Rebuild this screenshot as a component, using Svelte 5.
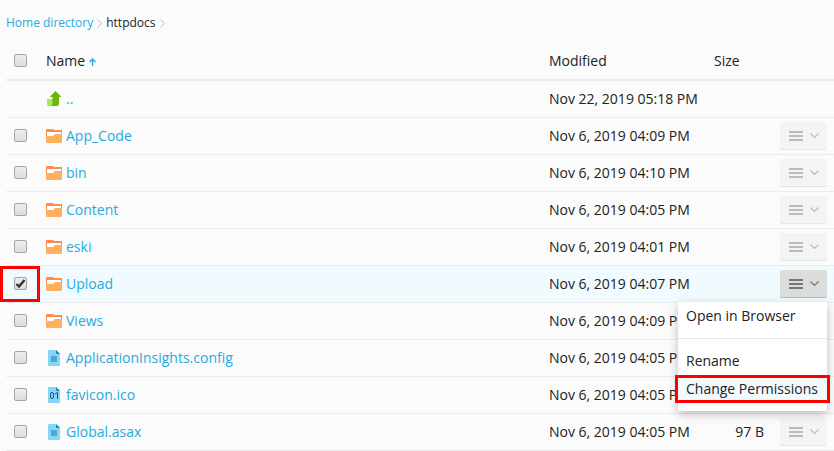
<script lang="ts">
    type Entry = {
        name: string;
        type: 'up' | 'folder' | 'file' | 'binary';
        modified: string;
        size?: string;
        checked?: boolean;
    };

    let entries: Entry[] = $state([
        { name: '..', type: 'up', modified: 'Nov 22, 2019 05:18 PM' },
        { name: 'App_Code', type: 'folder', modified: 'Nov 6, 2019 04:09 PM', checked: false },
        { name: 'bin', type: 'folder', modified: 'Nov 6, 2019 04:10 PM', checked: false },
        { name: 'Content', type: 'folder', modified: 'Nov 6, 2019 04:05 PM', checked: false },
        { name: 'eski', type: 'folder', modified: 'Nov 6, 2019 04:01 PM', checked: false },
        { name: 'Upload', type: 'folder', modified: 'Nov 6, 2019 04:07 PM', checked: true },
        { name: 'Views', type: 'folder', modified: 'Nov 6, 2019 04:09 PM', checked: false },
        { name: 'ApplicationInsights.config', type: 'file', modified: 'Nov 6, 2019 04:05 PM', checked: false },
        { name: 'favicon.ico', type: 'binary', modified: 'Nov 6, 2019 04:05 PM', checked: false },
        { name: 'Global.asax', type: 'file', modified: 'Nov 6, 2019 04:05 PM', size: '97 B', checked: false },
    ]);

    let openMenu = $state('Upload');

    function toggleMenu(name: string) {
        openMenu = openMenu === name ? '' : name;
    }

    function toggleAll(event: Event) {
        const checked = (event.target as HTMLInputElement).checked;
        for (const entry of entries) {
            if (entry.type !== 'up') entry.checked = checked;
        }
    }
</script>

{#snippet icon(type: string)}
    <svg class="icon" width="16" height="16" viewBox="0 0 16 16" aria-hidden="true">
        {#if type === 'up'}
            <path d="M1 8h7v7H3a2 2 0 0 1-2-2z" fill="#a8e65c" />
            <path d="M9.500 0L15 5.500V6h-2v7a2 2 0 0 1-2 2H4c1.500 0 2.500-1 2.500-2.500V6H4v-.5z" fill="#6cb60a" />
        {:else if type === 'folder'}
            <path d="M0 2a1 1 0 0 1 1-1h6l1 1h8v6H0z" fill="#ff8c4a" />
            <path d="M1 4h14v4H1z" fill="#fff" />
            <path d="M0 8h7l2-2h7v8a1 1 0 0 1-1 1H1a1 1 0 0 1-1-1z" fill="#ffb05c" />
        {:else}
            <path d="M2 1a1 1 0 0 1 1-1h7l4 4v11a1 1 0 0 1-1 1H3a1 1 0 0 1-1-1z" fill="#85d5f7" />
            <path d="M10 0l4 4h-3a1 1 0 0 1-1-1z" fill="#1887ad" />
            {#if type === 'file'}
                <rect x="5" y="6" width="6" height="6" fill="#4da9d3" />
            {:else}
                <rect x="4.500" y="5.500" width="3" height="6" rx="1.500" fill="none" stroke="#0b5a7a" />
                <path d="M9 7l2.500-1.500V12" fill="none" stroke="#0b5a7a" />
            {/if}
        {/if}
    </svg>
{/snippet}

<div class="files">
    <nav class="path">
        <a href="#home">Home directory</a>
        <svg width="5" height="9" viewBox="0 0 5 9" aria-hidden="true"><path d="M.5.5l4 4-4 4" /></svg>
        <span>httpdocs</span>
        <svg width="5" height="9" viewBox="0 0 5 9" aria-hidden="true"><path d="M.5.5l4 4-4 4" /></svg>
    </nav>

    <table>
        <thead>
            <tr>
                <th class="check"><input type="checkbox" aria-label="Select all" onchange={toggleAll} /></th>
                <th>
                    Name
                    <svg class="sort" width="7" height="8" viewBox="0 0 7 8" aria-hidden="true">
                        <path d="M3.500 8V1M.5 4l3-3 3 3" stroke-width="1.400" />
                    </svg>
                </th>
                <th class="modified">Modified</th>
                <th class="size">Size</th>
                <th class="actions"></th>
            </tr>
        </thead>
        <tbody>
            {#each entries as entry (entry.name)}
                <tr class:selected={entry.checked}>
                    <td class="check">
                        {#if entry.type !== 'up'}
                            <input type="checkbox" aria-label={entry.name} bind:checked={entry.checked} />
                        {/if}
                        {#if entry.checked}
                            <span class="mark"></span>
                        {/if}
                    </td>
                    <td>
                        <a class="name" href="#{entry.name}">{@render icon(entry.type)}{entry.name}</a>
                    </td>
                    <td>{entry.modified}</td>
                    <td class="amount">{entry.size ?? ''}</td>
                    <td class="actions">
                        {#if entry.type !== 'up'}
                            <button
                                class="toggle"
                                class:open={openMenu === entry.name}
                                aria-label="Actions for {entry.name}"
                                onclick={() => toggleMenu(entry.name)}
                            >
                                <svg width="14" height="10" viewBox="0 0 14 10" aria-hidden="true">
                                    <path d="M0 1h14M0 5h14M0 9h14" stroke-width="2" />
                                </svg>
                                <svg width="9" height="5" viewBox="0 0 9 5" aria-hidden="true">
                                    <path d="M.5.5l4 4 4-4" stroke-width="1.200" />
                                </svg>
                            </button>
                        {/if}
                        {#if openMenu === entry.name}
                            <div class="menu">
                                <button>Open in Browser</button>
                                <hr />
                                <button>Rename</button>
                                <button class="active">Change Permissions</button>
                            </div>
                        {/if}
                    </td>
                </tr>
            {/each}
        </tbody>
    </table>
</div>

<style>
:global(body) {
    margin: 0;
    background-color: #fbfbfb;
    overflow-x: hidden;
}

.files {
    padding: 13px 0 0 6px;
    font-family: "Open Sans", sans-serif;
    font-size: 14px;
    line-height: 20px;
    color: #222;
}

a {
    color: #28aade;
    text-decoration: none;
}

.path {
    display: flex;
    align-items: center;
    gap: 4px;
    height: 20px;
    margin-bottom: 9px;
    font-size: 12px;
}

.path svg {
    fill: none;
    stroke: #bbb;
}

table {
    width: 100%;
    table-layout: fixed;
    border-collapse: separate;
    border-spacing: 0;
}

th,
td {
    box-sizing: border-box;
    height: 37px;
    padding: 0 10px;
    border-bottom: 1px solid #ebebeb;
    text-align: left;
    font-weight: normal;
    white-space: nowrap;
}

th {
    height: 39px;
    border-bottom-width: 2px;
}

.check {
    position: relative;
    width: 30px;
    padding: 0 8px;
}

.modified {
    width: 165px;
}

.size {
    width: 70px;
}

.amount {
    text-align: right;
}

.actions {
    position: relative;
    width: 60px;
    padding: 0 7px 0 6px;
}

.selected td {
    background-color: #f0faff;
}

.sort {
    fill: none;
    stroke: #28aade;
}

.name {
    display: flex;
    align-items: center;
    gap: 4px;
}

input {
    appearance: none;
    display: block;
    box-sizing: border-box;
    width: 13px;
    height: 13px;
    margin: 0;
    border: 1px solid #a5a5a5;
    border-radius: 2px;
    background: linear-gradient(#eee, #dcdcdc);
}

td input {
    margin-bottom: 1px;
}

input:checked {
    background: url("data:image/svg+xml,%3Csvg xmlns='http://www.w3.org/2000/svg' viewBox='0 0 11 11'%3E%3Cpath d='M1.500 6l2.500 2.500L9.500 2' fill='none' stroke='%23333' stroke-width='2.400'/%3E%3C/svg%3E"), linear-gradient(#eee, #dcdcdc);
}

.mark {
    position: absolute;
    top: 0;
    left: -6px;
    box-sizing: border-box;
    width: 40px;
    height: 36px;
    border: 3px solid #f00;
    z-index: 1;
    pointer-events: none;
}

button {
    border: none;
    font: inherit;
    color: inherit;
}

.toggle {
    display: flex;
    align-items: center;
    justify-content: space-between;
    box-sizing: border-box;
    width: 100%;
    height: 28px;
    padding: 0 8px 0 9px;
    border-bottom: 1px solid #e6e6e6;
    border-radius: 2px;
    background-color: #f4f4f4;
}

.toggle svg {
    fill: none;
    stroke: #bcbcbc;
}

.toggle.open {
    border-color: #bbb;
    background-color: #dcdcdc;
}

.toggle.open svg {
    stroke: #777;
}

.menu {
    position: absolute;
    top: 100%;
    right: 7px;
    box-sizing: border-box;
    min-width: 149px;
    padding-bottom: 8px;
    border-radius: 0 0 2px 2px;
    background-color: #fff;
    box-shadow: 0 3px 10px rgba(0, 0, 0, 0.25);
    z-index: 2;
}

.menu button {
    display: block;
    width: 100%;
    height: 28px;
    padding: 0 8px;
    background-color: #fff;
    text-align: left;
}

.menu .active {
    position: relative;
    background-color: #f0faff;
}

.menu .active::after {
    content: "";
    position: absolute;
    inset: 0 -3px;
    border: 3px solid #f00;
}

hr {
    height: 1px;
    margin: 8px 0;
    border: none;
    background-color: #e6e6e6;
}
</style>
